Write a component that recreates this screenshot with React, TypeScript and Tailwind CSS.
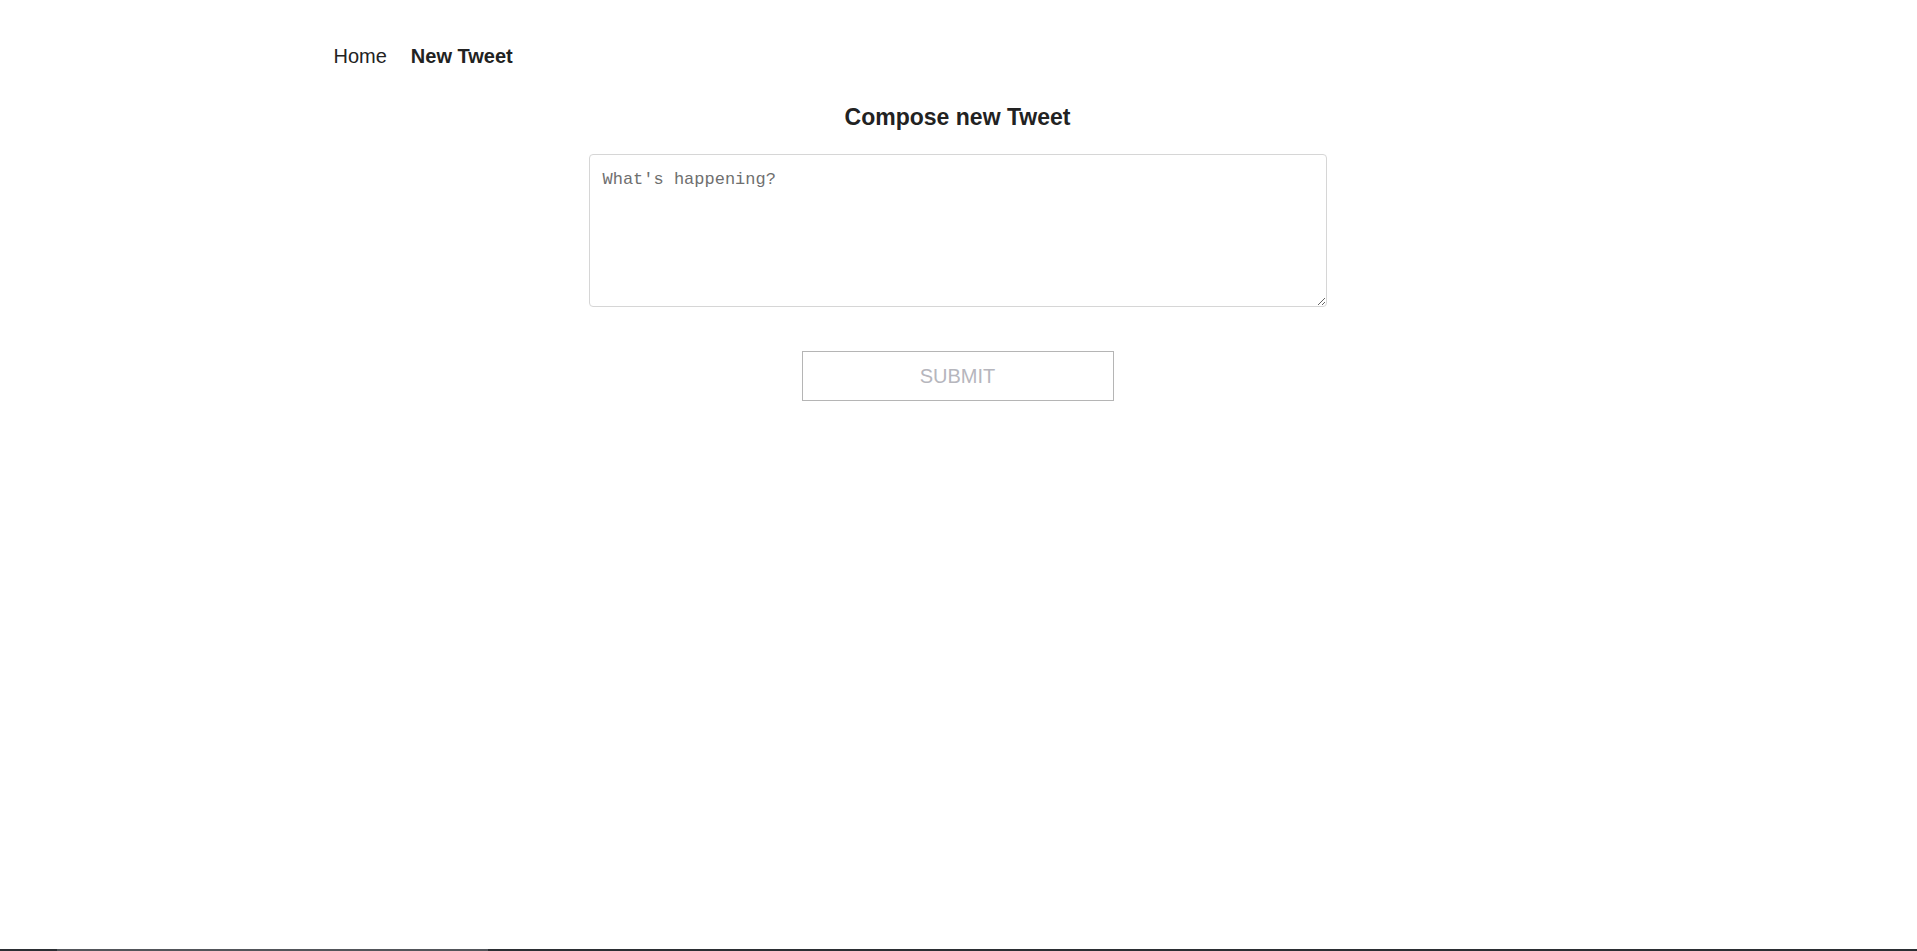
import React from "react";

export default function App() {
  return (
    <div className="flex h-[951px] w-full flex-col bg-white text-[#222] [font-family:'Liberation_Sans',Arial,sans-serif]">
      <div className="flex-1">
        <div className="mx-auto w-[1250px]">
          <nav className="flex items-center gap-6 pt-[45px] text-[20px] leading-[22px]">
            <a className="text-[#222]">Home</a>
            <a className="font-bold text-[#222]">New Tweet</a>
          </nav>
        </div>
        <div className="flex flex-col items-center pr-[2px]">
          <h1 className="mt-[37px] text-[23px] font-bold leading-[26px]">Compose new Tweet</h1>
          <textarea
            placeholder="What's happening?"
            className="mt-[24px] h-[153px] w-[738px] rounded-[4px] border border-[#d6d6d6] bg-white px-[13px] py-[12px] text-[17px] text-[#333] outline-none placeholder:text-[#6f6f6f] [font-family:'Liberation_Mono',monospace]"
          />
          <button
            disabled
            className="mt-[44px] flex h-[50px] w-[312px] items-center justify-center border border-[#b5b5b5] bg-white text-[20px] text-[#b6b6bd]"
          >
            SUBMIT
          </button>
        </div>
      </div>
      <div className="flex h-[2px] w-full bg-[#2b2e33]">
        <div className="ml-[57px] h-full w-[431px] bg-[#52555a]" />
      </div>
    </div>
  );
}
